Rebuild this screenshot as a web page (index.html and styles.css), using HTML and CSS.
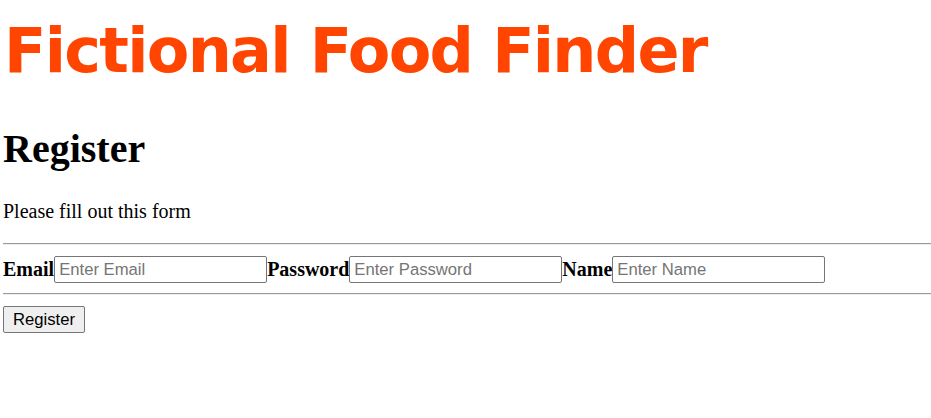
FILE: index.html
```html
<!DOCTYPE html>
<html>
<head>
<meta charset="utf-8">
<title>Fictional Food Finder</title>
<link rel="stylesheet" href="styles.css">
</head>
<body>
<h1 class="brand">Fictional Food Finder</h1>
<h2 class="title">Register</h2>
<p class="intro">Please fill out this form</p>
<hr class="rule">
<form class="form">
  <div class="row">
    <label class="label" for="email">Email</label><input class="field" id="email" type="text" placeholder="Enter Email">
    <label class="label" for="pw">Password</label><input class="field" id="pw" type="password" placeholder="Enter Password">
    <label class="label" for="name">Name</label><input class="field" id="name" type="text" placeholder="Enter Name">
  </div>
  <hr class="rule rule-2">
  <button class="btn" type="button">Register</button>
</form>
</body>
</html>
```
FILE: styles.css
```css
html, body {
  background: #fff;
}
body {
  margin: 0 0 0 3px;
  font-family: "Liberation Serif", "Times New Roman", serif;
  font-size: 20px;
  color: #000;
}
.brand {
  margin: 14px 0 0 1px;
  font-family: "DejaVu Sans", Verdana, sans-serif;
  font-weight: bold;
  font-size: 62px;
  letter-spacing: -1.7px;
  line-height: 74px;
  color: #ff4500;
}
.title {
  margin: 38px 0 0 0;
  font-size: 40px;
  font-weight: bold;
  line-height: 46px;
}
.intro {
  margin: 28px 0 0 0;
  line-height: 23px;
}
.rule {
  margin: 20px 0 0 0;
  border: 0;
  border-top: 1px solid #9a9a9a;
  border-bottom: 1px solid #eeeeee;
  height: 0;
}
.form {
  margin: 0;
}
.row {
  display: flex;
  align-items: center;
  margin-top: 11px;
}
.label {
  font-weight: bold;
  font-size: 20px;
  line-height: 23px;
}
.field {
  box-sizing: border-box;
  width: 213px;
  height: 27px;
  margin: 0;
  padding: 1px 4px;
  border: 1px solid #767676;
  border-radius: 2px;
  font-family: "Liberation Sans", Arial, sans-serif;
  font-size: 16.67px;
  color: #000;
}
.field::placeholder {
  color: #757575;
}
.rule-2 {
  margin-top: 10px;
}
.btn {
  display: block;
  box-sizing: border-box;
  margin-top: 11px;
  width: 82px;
  height: 27px;
  padding: 1px 6px;
  background: #efefef;
  border: 1px solid #767676;
  border-radius: 2px;
  font-family: "Liberation Sans", Arial, sans-serif;
  font-size: 16.67px;
  color: #000;
}
```
